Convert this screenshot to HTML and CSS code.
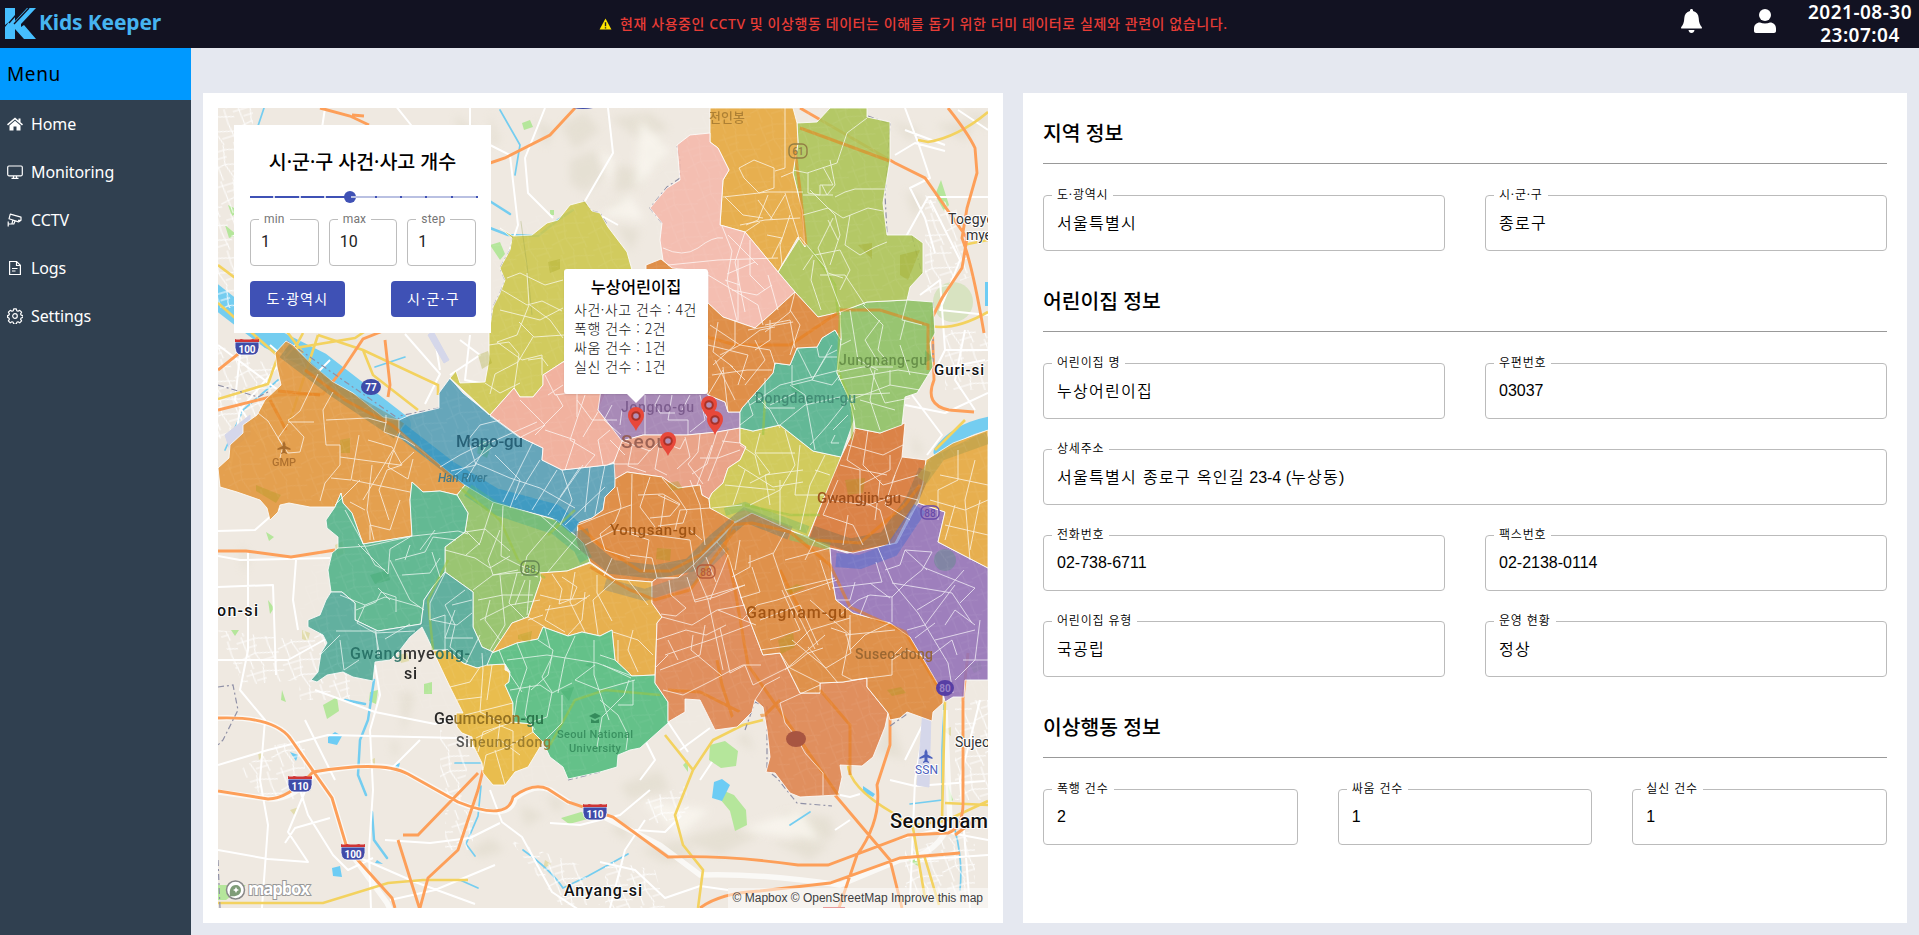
FILE: index.html
```html
<!DOCTYPE html>
<html lang="ko">
<head>
<meta charset="utf-8">
<title>Kids Keeper</title>
<link rel="stylesheet" href="styles.css">
</head>
<body>
<header class="topbar">
  <div class="brand">
    <svg class="brand-mark" viewBox="0 0 33 33"><path d="M1 1h10v13L23 1h9L17 17v3l3-2 12 14H20l-9-10v10H1V20L5 15 1 18z" fill="#46bfff"/><path d="M5 16 18 1M10 17 25 1" stroke="#121222" stroke-width="1.4" fill="none"/></svg>
    <span class="brand-name">Kids Keeper</span>
  </div>
  <div class="notice">
    <svg class="notice-icon" viewBox="0 0 14 14"><path d="M7 1 13.4 13H.6z" fill="#ffe500"/><path d="M7 5v4.4M7 10.6v1.3" stroke="#222" stroke-width="1.5"/></svg>
    <span class="notice-text">현재 사용중인 CCTV 및 이상행동 데이터는 이해를 돕기 위한 더미 데이터로 실제와 관련이 없습니다.</span>
  </div>
  <div class="tools">
    <svg class="tool-bell" viewBox="0 0 21 24" fill="#fff"><path d="M10.500 0c1 0 1.500.6 1.500 1.500v.6c3.600.8 5.500 3.500 5.700 7 .2 4.400 1.100 6.800 3 8.800.6.800.2 1.700-.7 1.700H1c-.9 0-1.300-.9-.7-1.700 1.900-2 2.800-4.400 3-8.800.2-3.500 2.100-6.200 5.700-7v-.6C9 .6 9.500 0 10.500 0zM7.500 21h6c-.3 1.900-1.400 3-3 3s-2.700-1.100-3-3z"/></svg>
    <svg class="tool-user" viewBox="0 0 22 24" fill="#fff"><circle cx="11" cy="6" r="6"/><path d="M6 13.500c3 1.200 7 1.200 10 0 3.500 0 6 2.500 6 6v2.500c0 1.200-.8 2-2 2H2c-1.200 0-2-.8-2-2v-2.500c0-3.500 2.500-6 6-6z"/></svg>
    <div class="clock"><span>2021-08-30</span><span>23:07:04</span></div>
  </div>
</header>
<div class="shell">
  <nav class="sidebar">
    <div class="menu-title">Menu</div>
    <a class="menu-item"><svg viewBox="0 0 16 16" fill="#fff"><path d="M8 1.500 0 8.300l1 1.200 7-6 7 6 1-1.200-2.500-2.100V2.500h-2v2z"/><path d="m8 4.800-5.500 4.700V14.500H6.500v-4h3v4h4V9.500z"/></svg><span>Home</span></a>
    <a class="menu-item"><svg viewBox="0 0 16 16" fill="none" stroke="#fff" stroke-width="1.200"><rect x=".7" y="2" width="14.600" height="9.800" rx="1.200"/><path d="M6.500 12v2M9.500 12v2M4.500 14.400h7"/></svg><span>Monitoring</span></a>
    <a class="menu-item"><svg viewBox="0 0 16 16" fill="none" stroke="#fff" stroke-width="1.200" stroke-linejoin="round"><path d="M3.300 2.200 14 5.200v3l-2.500 1.700L2 6.800zM11 8.300l3-.3M5.800 8.300 4.900 12H1.200M1.200 9.500v5M8 9l-1.200 3H5"/></svg><span>CCTV</span></a>
    <a class="menu-item"><svg viewBox="0 0 16 16" fill="none" stroke="#fff" stroke-width="1.200"><path d="M2.600 1.500h7l3.800 3.800v9.200H2.600zM9.500 1.500v4h4M5 8.500h5.500M5 11h3.500"/></svg><span>Logs</span></a>
    <a class="menu-item"><svg viewBox="0 0 16 16" fill="none" stroke="#fff" stroke-width="1.200" stroke-linejoin="round"><circle cx="8" cy="8" r="2.300"/><path d="M6.700.9h2.600l.5 1.900 1.200.5 1.700-1 1.900 1.900-1 1.700.5 1.200 1.900.5v1.800l-1.900.6-.5 1.200 1 1.700-1.900 1.900-1.700-1-1.200.5-.5 1.800H6.700l-.5-1.800-1.200-.5-1.700 1-1.900-1.900 1-1.700-.5-1.200L.6 9.400V7.600l1.300-.5.5-1.200-1-1.700 1.900-1.900 1.700 1 1.200-.5z"/></svg><span>Settings</span></a>
  </nav>
  <main class="content">
    <section class="card map-card">
      <div class="map">
        <svg class="map-canvas" viewBox="218 108 770 800">
          <defs>
            <filter id="soft"><feGaussianBlur stdDeviation="4"/></filter>
            <pattern id="mesh" width="38" height="34" patternUnits="userSpaceOnUse" patternTransform="rotate(-17)"><path d="M0 5h20l18 5M0 22l15-3 23 6M6 0l3 34M19 0l-4 19 5 15M30 0v15l3 19M9 12h10M20 28h13" fill="none" stroke="#fff" stroke-width="1"/></pattern>
            <path id="pin" d="M0 0C-2-6-8-9-8-16a8 8 0 0 1 16 0C8-9 2-6 0 0z"/>
            <g id="interstate"><path d="M-12-5Q-13 8-6 8H6Q13 8 12-5z" fill="#3f4ba8" stroke="#fff" stroke-width=".8"/><path d="M-12-5v-3q3 1 6 0 6 1 12 0 3 1 6 0v3z" fill="#cf3535"/></g>
            <clipPath id="city"><path d="M275 353 286 341 333 382 399 420 439 408 456 371 493 330 493 230 583 201 632 265 663 259 650 208 677 140 710 108H867L890 122 887 235 923 243 907 300 933 302 933 367 905 397 902 457 926 460 988 430V700L943 703 890 720 838 800H790L755 700 715 730 668 722 568 780 505 785 456 713 300 690 300 600 335 507 218 487z"/></clipPath>
          </defs>
          <rect x="218" y="108" width="770" height="800" fill="#efe9e1"/>

          <!-- terrain shading -->
          <g filter="url(#soft)" fill="#d9d4c2" opacity=".42">
            <path d="M560 125 585 112 600 130 575 150zM610 118l40-5 20 15-30 12zM570 160l25-10 10 25-20 18-15-10zM615 165l30 5-5 18-25 5zM590 200l20 5 20-8-5 16zM615 225l25 5-8 22zM640 150l25-10-10 30z"/>
            <path d="M620 785l40-15 10 20-40 10zM680 840l50-15 30 10-40 20zM780 812l50 5 5 20-35 10zM640 850l40-10 15 15-30 8zM520 805l25 10-20 12zM545 795l20 5-8 15zM610 830l15-12 5 25zM735 740l12-8 8 20zM770 840l60 5-20 15z"/>
            <path d="M890 120l30 10-10 12zM935 125l40-5-10 22zM905 190l20 10-10 20zM890 720l15 40-30-8zM960 110l28 5v15z"/>
            <path d="M400 690l15 5-12 40zM390 740l10 5-6 15zM470 850l20-12 15 12-25 8zM240 545l10 10-6 20zM912 432l12 20-10 4zM455 115l20 15-14 20zM490 112l10 30-10 5zM535 120l20 10-10 18z"/>
          </g>
          <g filter="url(#soft)" fill="#faf7f0" opacity=".8"><path d="M640 120l30 30-35 40zM600 215l30-20 15 25zM640 800l70 10-30 25zM740 830l60-20 20 30zM600 150l15 10-5 25z"/></g>
          <!-- parks -->
          <g fill="#b5e69b">
            <path d="M710 745l15-4 13 10-2 15-15 2-12-8zM722 790l12 5 12 15 1 15-12 6-5-20-10-12zM490 245l10-3 5 12-5 6zM323 705l14-8 2 14-12 8zM370 692l8-2-2 14-7-3zM424 684l8-2v12h-8zM561 818l20-6 18 4-30 8zM218 885h28l-20 15h-8zM266 532l8 5-5 4zM240 150l10 8-8 4zM228 205l12 6-8 5zM225 225l12 10-8 3zM935 195l6-15 8 25-5 6zM908 860l14-2-4 8zM948 785l5 15-4 4zM683 765l5-5v12zM522 123l8-3 3 7-9 3zM550 210h4v5h-4z"/>
            <circle cx="953" cy="302" r="20" opacity=".55" fill="#c5dfa8"/><path d="M970 665l10-4 2 8-8 4zM268 600l6 8-4 6zM231 630h8l-4 6zM282 690l4 12-5-2z"/>
          </g>
          <g fill="#e2dcae"><path d="M335 545l8-4 2 12-8 3zM302 630l8 3-2 8-6-2zM398 655l9-2 2 8-8 2zM370 760l5-2v7zM258 752l6 3-5 5zM462 655l7-2 3 9-7 2zM290 810l9-3-4 9zM545 860l6 4-8 5zM942 730l9-3v9z"/></g>
          <!-- water -->
          <g fill="none" stroke="#74cdf0" stroke-linecap="round">
            <path d="M210 292Q235 312 270 338L320 363 400 425" stroke-width="22"/>
            <path d="M940 452Q955 430 990 423" stroke-width="13"/>
            <path d="M374 680 368 720 360 740 358 775 366 795M372 812l2 28 13 18M345 700l20 4M488 200l22 14M490 228l18 7 30 1 20-16 15-10" stroke-width="2.500"/>
            <path d="M944 705l-2 45 0 50-32 4M523 850q28 20 40 38l25-12 40-22M460 880l18 8M481 786l-3 30-12 28 9 12M955 830q8 30 5 60M225 450l18-40 35-30M375 367l30-10M265 105l-10 30 12 20M500 110l20 35-5 30M790 825l20-13M455 763h25" stroke-width="1.700"/>
          </g>
          <g fill="#6dccf4"><path d="M714 782l8-3 8 6-4 8-4 8-10-3zM328 737l7-5 7 4-5 9-9-2zM290 752l8 3-2 6zM332 868l8-2 2 11-9-1zM394 765l6-2-2 7zM863 786l12 8-2 3-10-5zM985 282h3v24h-3zM377 860l6 4-8-1z"/></g>

          <!-- local streets -->
          <g fill="url(#mesh)" opacity=".95">
            <path d="M218 108h35v200h-35zM218 345l65 25-15 40-50 30zM275 745l30-5v60h-40l-25-30zM218 630l80 10v40l-55 5zM295 630l55 5v65h-50zM440 715l30 40-10 50-20-10zM445 810h28v40h-28zM510 840l70 25 20 40h-40zM605 860l50 10 10 38h-60zM925 195l30 10 20 70-50 20zM945 330h43v60h-43zM955 700h33v100h-33zM905 850l70-20v70h-70zM645 800l40-15 5 30-40 10z"/>
          </g>
          <g id="streets" fill="none" stroke="#fff" stroke-width="2" stroke-linejoin="round">
            <path d="M218 531 255 530 280 508M218 556 240 560 330 558M218 587l55-2 3 90M248 550v100l-8 40 25 30-5 60 8 45-8 110 22 30 20 20M218 660h70l45-25M296 560l-3 40 5 30M375 665l5 30-10 35 3 60-4 60 2 60M315 690l60 22 60 12 30-10M218 765l50-15 60-15 130 3 20 12M218 850l50 9 40 3-20-30 25-60M300 790l8 25 25 40 15 15 25-12M305 720l20 40 10 20M420 740l-30 30-25-5M330 818l-35 10-10 15M490 790l12 32 20 15 30 55 30 20M385 840l45 3 40-5 30-15M550 823l30 2 40-10 30-25M360 858l55 24 60 22M390 900l45-10 60-25M600 862l35 8 30 28 35-12 28 4M645 820l-20 30-15 58M640 780l15-20-10-20M668 722l20 30M680 750l30-22M700 780l12-18M635 830l30 2 15-15"/>
            <path d="M325 108l-6 40 20-5M395 105l20 25 30 3M470 108v25h-20M545 108l-20 50 3 35 25 25M490 145l20 10 8 70-10 30M585 201l28-48-5-45M600 215l18 10M218 345l60 45 30 10M240 355l-5 45 30 45M270 345l40 35 20-20M300 340l-60 70-10 60M405 334l35 40-15 30M460 340l20 15-30 20M470 335l-5 45 20 4M430 310l10 60M905 108l15 40 10 30-20 10 15 30 10 35M988 197h-60l-25 45M895 155l20-12 30 8M905 130l40 15M988 130l-30-20M930 200l30 60-20 50 48 5M920 295l20-15 5 70-10 20 50-10M905 405l40 8 43-20M912 395l30 40-15 20M965 330l-10 50 20 30M945 350h43M905 760l20-40-10 60-5 120M980 700l-20 80 10 128M890 780l25 6 70-5M895 840l40-10 53 10M915 860l73-5M840 795l10 2 10-3M850 820l-15 10"/>
          </g>
          <g fill="none" stroke="#d5d7ea"><path d="M225 435l25-20 0 20-20 15zM428 335l5-4 16 29-5 3zM923 710l8 2-2 75-12-2z" fill="#d5d7ea" stroke-width="1"/></g>

          <!-- highways -->
          <g fill="none" stroke="#fff" stroke-width="5.500" opacity=".7"><path d="M218 718q55-2 72 20l42 60 15 50 40 55 5 10M210 791l60 8q25 0 45-26 70-15 95 2l50 28q50 20 55-5 20-15 35-8l20 13M600 815l60 30 40 30q60-2 140 10l60-25q40-5 50-40l-5-110"/></g>
          <g fill="none" stroke="#f3d25f" stroke-width="2.600">
            <path d="M218 265l40 30 30 38 15 20M218 303l60 53-10 28-50 15M290 420l28-85M318 335l45 15 75 35v10M303 333l-8 15 60-10 12-8M363 350l10 25 45 35M988 112q-30 25-60 30l-10-2M930 326q25 5 58-14M988 240l-25 5M965 420l-30 30M218 903h105l65-20 35-3h45M665 735l28 35-18 45 8 30 20 25-5 38M693 770l20-30 30-15 20-5M848 760q-3 25 45 53l20 15 12 70M942 820l3-120M945 803l43 2M905 826l40-5 43-20M924 855l15 50"/>
          </g>
          <g fill="none" stroke="#fd9f59" stroke-width="2.900">
            <path d="M320 108l30 8 19 9M352 115l12 1M490 163l15-5 45-23 25-27M218 370l40-32M218 410l60-15 45-1 20-25 20-30 20-8M385 340l5 45-2 12M800 108l95 55 30 15 42 60-5 30-20 30-10 20 2 62q-10 25 15 30l25 2M948 108q20 25 27 40l2 25-10 35-5 30q10 25 22 95M218 551l28 0 45 6 44-7M218 718q55-2 72 20l42 60 15 50 45 50 3 10M218 791l50 8q20 0 45-27 70-12 95 2l50 28q50 20 55-5 20-15 35-8l20 13 45 15 55 40q60-2 130 8l30 0 80-30 40-2q15-5 15-30v-105l5-45M403 835h15l60-62M398 840l22 70M420 908l8-30 30-28 20-60 5-20M700 908q20-15 60-17l70-8 70-25 60-5M890 715v30l-13 40q5 35-20 70l-18 53M835 795l55 65 12 48M975 820l-20 15"/>
          </g>
          <g fill="none" stroke="#8f90a6" stroke-width="1.200" stroke-dasharray="6 3 2 3">
            <path d="M218 687l15-2 5 25-15 30-5 5M218 860l2 48M218 385l40 12 10-5M287 341l60 42 55 38M439 408l-40 8M489 333l4-26 7-14 5-13-5-12 10-18 3-15M583 201l9 10 8 2 8 13M600 772l-32 8M745 730l10-28 12 5v30l0 33 10 8 20 25 35 3M662 223l-12-15 17-21 13-9 0-18-3-14M868 116l22 8-5 70 2 40M912 236l10 38M933 302v60M423 623l-20 20M890 726l17-12"/>
          </g>

          <!-- districts -->
          <g class="districts">
            <path fill="#e3973b" d="M275 353 286 341 293 345 310 363 333 382 353 393 383 417 399 420 399 432 417 447 450 472 465 485 457 495 440 491 423 492 412 482 410 500 412 536 363 544 352 513 343 503 341 493 335 507 310 507 289 503 280 505 278 512 270 520 267 508 260 500 237 492 220 487 218 468 229 458 230 445 243 433 243 425 257 415 265 400 281 385 277 367z"/>
            <path fill="#549db5" d="M450 378 463 393 490 415 520 437 543 448 542 460 562 470 607 465 616 463 615 487 605 497 603 510 592 518 578 523 577 537 557 520 517 509 493 502 465 485 440 465 399 432 399 420 410 415 439 408 439 393z"/>
            <path fill="#cec84d" d="M585 201 592 211 600 213 608 227 627 252 632 270 632 300 563 362 543 375 543 385 533 397 520 397 514 388 490 415 450 378 456 371 460 383 485 382 489 360 489 333 493 307 500 293 505 280 500 268 510 250 512 238 500 228 513 236 532 235 547 223 558 220 570 205z"/>
            <path fill="#f2ab96" d="M563 362h45l-3 33-7 15 25 31-9 21-7 3-45 5-20-10 1-12-23-11-30-22 24-27 6 9h13l10-12v-10z"/>
            <path fill="#9f7db2" d="M605 362h95l8 33 17 7 3 10h12v16l-23 4-30 3h-44l-21 6-24-31z"/>
            <path fill="#ea9b7d" d="M622 441 643 435 687 435 717 432 740 428 740 443 746 447 740 460 728 468 723 483 712 493 709 499 702 495 700 485 678 488 662 477 627 472 615 479 614 462z"/>
            <path fill="#dd8335" d="M615 479 627 472 662 477 678 488 700 485 702 495 709 499 710 508 728 517 735 522 693 565 678 578H657L652 582 615 579 590 562 583 543 577 537 578 523 592 518 603 510 605 497 615 487z"/>
            <path fill="#8fc163" d="M465 485 493 502 517 509 557 520 577 537 583 543 590 562 567 571 540 573 541 579 528 617 512 623 493 652 482 647 473 627 473 592 445 572 445 547 465 532 468 513 457 495z"/>
            <path fill="#50b389" d="M457 495 440 491 423 492 412 482 410 500 412 536 363 544 352 513 343 503 341 493 335 507 326 520 327 528 338 537 338 548 332 553 328 570 331 592 342 592 355 603 355 620 378 631 421 624 424 600 432 588 445 572 445 547 465 532 468 513z"/>
            <path fill="#4fa997" d="M445 572 473 592 473 627 482 647 493 652 487 666 477 668 463 663 448 650 433 650 427 637 422 627 410 637 400 650 390 660 375 662 373 681 353 677 343 672 327 675 317 682 311 680 318 672 321 653 327 643 323 635 308 627 308 620 320 615 326 600 331 592 342 592 355 603 355 620 378 631 421 624 424 600 432 588z"/>
            <path fill="#e9b73a" d="M433 651 448 650 463 663 477 668 487 665 505 664 505 670 510 672 509 682 505 685 513 703 513 722 532 724 533 732 543 742 528 767 515 772 505 785 493 785 483 773 482 763 473 745 472 737 462 733 457 727 456 713 463 713 450 687z"/>
            <path fill="#e6a93c" d="M540 573 567 571 590 563 613 579 652 582 652 603 662 617 657 623 655 675 632 676 615 660 612 630 600 636 582 632 568 636 543 627 538 639 517 643 492 653 512 623 528 617 541 579z"/>
            <path fill="#51bc7d" d="M492 653 517 643 538 639 543 627 568 636 582 632 600 636 612 630 615 660 632 676 655 675 655 683 668 702 668 723 640 748 630 750 618 755 617 767 600 772 568 779 563 767 550 757 543 742 533 732 532 724 513 722 513 703 505 685 509 682 510 672 505 664 487 665z"/>
            <path fill="#df834d" d="M652 582 657 578 678 578 693 565 717 542 728 555 733 572 743 603 763 655 780 653 800 693 820 693 820 683 843 682 867 678 867 687 888 713 885 727 873 757 862 766 840 765 842 777 838 795 800 797 790 793 775 773 766 772 770 757 767 730 763 707 755 700 752 712 737 727 715 730 700 700 685 699 685 712 668 722 668 702 655 683 657 623 662 617 652 603z"/>
            <path fill="#dd8537" d="M717 542 735 523 752 513 787 529 808 538 830 548 832 577 836 600 853 613 890 623 910 637 928 667 943 693 943 703 933 712 932 721 907 712 900 718 890 720 888 713 867 687 867 678 843 682 820 683 820 693 800 693 780 653 763 655 743 603 733 572 728 555z"/>
            <path fill="#9371b8" d="M830 548 847 553 897 543 918 503 945 512 938 542 988 568 988 680 965 680 964 697 953 697 945 702 943 693 928 667 910 637 890 623 853 613 836 600 832 577z"/>
            <path fill="#cec84b" d="M740 428 753 431 780 425 813 451 841 457 833 480 823 500 808 537 787 529 752 513 735 522 710 508 709 499 712 493 723 483 728 468 740 460 746 447 740 443z"/>
            <path fill="#d97533" d="M855 428 880 433 905 423 902 457 926 460 923 483 917 500 895 543 853 553 830 548 808 538 823 500 841 457z"/>
            <path fill="#e6a83b" d="M926 460 953 443 988 430 988 568 938 542 945 512 918 503 923 483z"/>
            <path fill="#50b28c" d="M742 408 773 373 775 363 790 365 797 348 817 347 822 338 835 330 841 340 837 373 850 400 854 420 841 457 813 451 780 425 753 431 740 428 740 412z"/>
            <path fill="#8dc162" d="M840 312 867 302 907 300 933 302 935 333 930 343 933 367 917 393 905 397 902 425 880 433 855 428 854 420 850 400 837 373 841 340z"/>
            <path fill="#adc456" d="M797 123 817 122 830 108 867 108 867 117 890 122 890 160 885 190 883 203 887 235 912 235 923 243 923 273 910 287 907 300 867 302 840 312 828 315 818 317 795 292 778 272 800 237 805 247 802 210 793 173 798 143z"/>
            <path fill="#e6a83b" d="M710 108H793L797 123 798 143 793 173 802 210 805 247 798 237 783 263 778 272 760 250 745 232 720 225 723 180 729 170 718 148 710 142z"/>
            <path fill="#f5b9ab" d="M710 142V133L690 135 677 145 680 180 667 188 650 208 662 223 660 240 663 260 708 303 723 317 755 328 772 313 795 292 778 272 760 250 745 232 720 225 723 180 729 170 718 148z"/>
            <path fill="#dd8335" d="M661 259 672 268 708 272V303L723 317 755 328 772 313 795 292 818 317 840 312 841 340 835 330 822 338 817 347 797 348 790 365 775 363 773 373 742 408 740 412H728L725 402 708 395 646 300V265z"/>
          </g>

          <!-- river and arterial roads showing through the fill -->
          <g clip-path="url(#city)" fill="none">
            <path d="M285 350 335 388 399 431" stroke="#7d8058" stroke-width="18" opacity=".45"/>
            <path d="M401 430 450 468 495 495 555 511 575 528" stroke="#2795c8" stroke-width="14" opacity=".6"/>
            <path d="M468 490 495 508 555 528 580 548 586 560" stroke="#4db384" stroke-width="13" opacity=".45"/>
            <path d="M581 530 585 545 612 567 655 572 690 565 715 540 745 515 790 533" stroke="#7d7f67" stroke-width="14" opacity=".5"/>
            <path d="M605 584 645 595 690 580 725 545" stroke="#8b8e79" stroke-width="12" opacity=".45"/>
            <path d="M725 512 745 506 808 530M790 536 830 546" stroke="#8ebf62" stroke-width="8" opacity=".6"/>
            <path d="M812 532 850 545 885 538 912 500 925 470" stroke="#92734f" stroke-width="13" opacity=".55"/>
            <path d="M836 560 860 562 892 550 920 508" stroke="#5d70cb" stroke-width="14" opacity=".6"/>
            <path d="M922 480 940 455 988 438" stroke="#b8a14d" stroke-width="12" opacity=".65"/>
            <g stroke="#ea7e15" stroke-width="3" opacity=".55">
              <path d="M278 391 320 395M270 400 286 430M305 370 345 400 392 425 455 480M578 525 600 545 640 571 670 571 700 555 730 525 752 523 790 532 830 565 850 607 905 632 940 690M590 567 630 590 655 600 690 590 735 530M733 520 725 545 735 590 748 665 838 795M717 660 722 685 735 725M668 690 700 692 750 717 765 715 780 700M820 690 850 725 850 775M780 570 800 610M800 128 895 163M795 150 800 190 806 245M840 310 880 310 928 325 928 370M650 320 735 345 790 345 839 312M815 540 860 543 905 505 920 485"/>
            </g>
            <g stroke="#9ac53f" stroke-width="2.500" opacity=".55"><path d="M460 488 500 520 518 560 545 578M550 745 575 700 605 690 660 695M745 505 790 515 820 515M840 315 838 370 852 405 852 440M765 400 763 435M812 250 835 285 838 315M433 650 428 600 448 560M548 535 575 510"/></g>
            <path d="M520 215q8 50 12 100" stroke="#8b9b45" opacity=".3"/>
          </g>
          <g fill="#9a9c10" opacity=".27"><path d="M256 485l25 10-5 8-20-12zM340 440l10-2v15h-9zM478 355l10-4 4 12-10 6zM548 262l12-3v10l-10 4zM657 548l14 1-1 12-14-2zM668 483l10-2 5 8-12 2zM778 640l15-8 2 15-14 7zM518 635l14-4-2 12-12-4zM785 590l12-6 8 4-15 6zM900 255l20-5-12 30-8-5zM845 480l20-2-2 15-15 2zM887 690l14-3 5 6-14 3zM858 245l14-2v16z"/></g>
          <g fill="#1e9b52" opacity=".22"><path d="M370 575l18-5 2 10-15 4zM585 665l10-5v10zM560 690l14-3-5 14zM790 385l8-2 4 12-10-4zM480 440l12 3-5 15-10-5zM925 350l8 8-8 5z"/><circle cx="945" cy="560" r="11"/></g>
          <g clip-path="url(#city)" opacity=".07"><rect x="218" y="108" width="770" height="700" fill="url(#mesh)"/></g>

          <!-- neighbourhood boundaries -->
          <g class="dong">
            <path d="M318 374l-18 37-7 6-5 3 16 17-4 15-12 1-10-15 10-14M333 392l-10 18 3 35 14 0 0 20-15 18-5 18M326 420l42-2 18 5 0-8M288 422h26M386 422l-2 10 22 8 9 6M359 435l-8 45-20-2M340 457l60 8 14-13M368 440l24 7 10 18-15 5-8 20 10 30M400 432l-12 35 20 12 5-20M393 450l-30 50M352 480l58 12M372 465l-5 45 7 30M335 505l25-25M258 413l10 8 15 25-3 12"/>
            <path d="M449 378l40 37M500 420l-20 5-12 15 8 25-25 6M490 440l-30 15-20 12M490 416l30 22M467 479l20-35 50-22M503 502l20-40 10-20M532 510l25-40M548 515l35-50M565 525l40-38M475 463l35 15 30 10 35 20M495 455l25 25-10 28M540 460l-25 40M562 470l10 30-12 25M580 467l-20 30M590 467l-5 45M605 465l-10 50M455 475l40-30"/>
            <path d="M507 278l13-5 25 12 18-5M502 290l25 15 15-4 20 10M527 273l2 32-12 30-20 7M500 310l40 10 23-12M489 345l20-3 10 12-5 35M530 305l20 15 13 18M497 342l25 18 20-5 0 20M519 322l15 15 30-2M533 337l-15 25-23 12-5 20M485 383l15 10 20-10M528 360l14-2 6 8"/>
            <path d="M556 394l7 12-20 20-22 11M563 385l-15 10M545 375l10 20 22-3 0 25M577 400l15 20 25 0M585 395l-15 45 25 15-10 12M520 400l25 25-10 10M598 412l-15 25M610 430l-12 10 5 25M545 430l30 10-10 30M625 455l-15-15M592 362l5 22 10 10"/>
            <path d="M645 395v40M660 395l-5 10 5 8h15M672 395l-4 25 20 0 0 15M690 395l-8 15M700 395l5 25-15 12M715 400l-10 15 13 15M612 405l-8 15 17 15M622 410l-2 15M622 441l28 10 10-10 20 8 5-10M632 446l-4 20 18 6M660 441l-5 28 12 6M685 437l5 20-13 12M700 434l-2 18-10 12 15 20M717 432l-10 32-15 10M728 431l-20 50M740 450l-22 8-18 0M650 450l-12 14-24 0M740 443l-18-2M712 445l-15 40"/>
            <path d="M632 474l-1 60 18 6-5 32M638 495l25-1 17 10-10 12-20 2M662 478l15 18 10 15-4 12-25 3M617 487l4 20-6 15-15 12 5 16 25 8M578 525l30-12 23-8M585 545l30-15 75 10 4 25M612 558l-8 18M690 480l10 25 5 40M650 477l-10 30 15 20M680 505l-22-10M657 578l-5-20-22-3M675 530l5-20 30-2M665 495l-5 35M702 540l-12-10"/>
            <path d="M493 503l-13 40-14 12M503 506l-2 50 20 10 19 6M445 550l30 8 15 10 20-12M465 532l20-3 25 22M480 545l-15-15M500 530l-12 30 5 15 30-3 15 5M473 590l20-15 25-5M478 600l25-5 30 0M480 620l30-15 30-5M500 575l5 50-15 25M517 573l-8 30 15 15M490 600l-5 20 15 20M525 580l-10 25M530 580l-3 35M557 521l-30 35-5 20M577 537l-30 36M540 515l40 35"/>
            <path d="M345 510l30 55 10 5M338 548l30-2 45-10 45-5 10 3M400 500l-10 30-20-5 0 15M365 510l-15-8M390 560l20 40 14 10M358 544l30 30 2-25 20-12M395 560l30-8 8-15 23 3M340 595l25 10 20-8 35 10M365 605l-8 18 18 10 40-2M432 552l8 25M402 575l28-2 10-15M390 600l-12-12M410 545l-5 15M336 631h40l2 25M356 610l20-8 5-10 15 5 0 15M435 530l-15 20"/>
            <path d="M445 573l-15 30 0 17 15-5 0 35M432 620l25 5 15-12M465 590l-20 15 10 20-5 22 18 15M472 600l-20 5M480 635l-15 30M455 610l-10 28 28 0M375 631l5 25M340 640l4 30 15-10M320 655l20-20M410 624l-25 15"/>
            <path d="M482 653l1 17-3 42 20 10-3 25M450 687l20-5 10-15M465 715l48-12M457 700l25-3M492 665l-5 35M513 722l-30 10-5 20M500 740l20 15M476 738l25-12 12 5 0 40M533 732l-25 15-22 8-3 15M495 750l10 35"/>
            <path d="M552 574l10 15-3 15 13-5 5-12-15-10M575 572l-5 30 15 30M540 595l20 5 27-2M597 575l0 18 15 28M545 610l30-5 15-10M615 580l-22 20 5 35M628 580l20 25M550 605l-5 15 20 12M528 620l15-5M613 632l25 8 15 15M618 640l0 22M633 630l-5 20 10 22M528 617l17 10M585 592l-3 28-14 15"/>
            <path d="M499 650l8 20 15 22M517 643l10 25-10 30-3 20M507 660l40-5 50 8 35 13M538 640l15 10-5 25-17 15M545 628l5 20M575 636l-10 22-7 35M594 640l0 35 15 45M510 690l30-5 12 8 20-10M552 657l-10 20 10 15-5 25-15 5M595 665l-20 15 25 10 35-10M600 655l15 5M629 680l-5 15-22 22-5 30M603 665l28 13M633 680l0 25-15 0M600 700l18 15 10 20-2 15M562 695l0 28-20 20M530 685l-5 30 10 15"/>
            <path d="M669 580l2 15 15 13-10 8-15-2M656 640l30-10 20 5 20-10M687 577l8 25 20-5 30-12M693 565l15 35 15 70M706 557l10 25M662 617l30 8 25-15 28-5M695 600l50-15M718 610l38 15M728 555l-18 45M668 655l-12 12M665 655l45-15 40-15M693 635l-2 15 30 25M720 628l10 45 15-8M705 625l-5 30-40 15M668 640l10 20M663 690l20 5 30-15 15-8 15-7 18 0M750 555l0 12-18 10M752 567l8 25-20 6M785 532l-12 22 12 35 30 60M773 553l-25 10M785 560l45-12M815 540l-10 20M757 605l20-5 60-20M770 640l30-10-18-40M760 650l35-5 15-15 40-12M820 560l10 30M785 590l50-12M792 640l34 28 25-15-5-20-15-5M800 605l18 40M810 600l40 35 0-20M760 620l40-15M757 605l-15 15M740 540l-5 30M780 653l10 15 30 15M745 665l8 20 20-10 20-10 15-12 15-5M825 635l-40 35M850 635l-8 40 10 5 40-5 0-18 10-10M850 630l0 20 15-15 25-12M808 647l30 36M780 703l5 20 12 15 8 15 18 20v22M755 700l10-15 15-8M780 703l40-18M845 635l50-5M892 660l15-10 20 8"/>
            <path d="M878 548l15 35 25 30 30 50 5 30M832 588l50-6-6-20M855 582l-5 18-14 0M840 615l18-15 12-5 22 2 0 25M868 595l-8 20M892 597l15-15 15-12 10-18M925 568l50 20-15 15M917 610l25-15 22-25M955 585l-30 40-18 5M915 638l20-15M932 655l20-15 5 15M892 583l60 10 20 30M885 570l15-5 5-15 27 2M945 625l10-15 20 15M935 640l40-10M955 680l20-20 5-40M963 660l25 0M870 583l20 15M905 550l22 20"/>
            <path d="M760 433l-5 20 15 20-20 10M785 430l10 35-15 25-30 15M770 505l-5-30 38-5M740 445l15 10 5 20M755 453l40 0M738 465l35 22 30-5M725 485l50 5M800 445l-5 50 30 0M825 455l-15 30-10 45M745 470l-12 35M780 480l0 45M712 508l30-3M815 470l15 5"/>
            <path d="M855 430l-8 30 15 10 25 5M848 445l35 10 20-10M868 430l-5 35 20 20 35-10M840 465l20 5 0 30 20 10 10 35M828 500l40 5 30-10 20 5M838 480l-15 35 30 10 10 20M860 485l30-15 0-15M880 480l-5 40M848 515l-5 30M895 475l-10 30 25 15M902 457l-10 25M958 450l0 30-20 10 0 30M940 475l48 10M930 500l35 10 23-10M975 460l-10 40 5 60M945 525l43 10M955 505l-10 35M980 500l-10 50"/>
            <path d="M755 395l15 15 10 18M740 425l13-10-5-15M792 365l0 20 20-5 15-25 10-5M797 348l15 30M840 370l-60 15-30 20M790 385l15 10 10 55M765 378l0 30 30 0M817 347l2 10 18 0M832 345l-20 35 20 5 8-10M770 405l25-12M848 400l-20 25-18 20M833 430l15-15M780 425l25-20 35-8M835 435l-4 8h8"/>
            <path d="M850 310l8 50 20 10M863 305l20 20-5 25 10 12M907 300l-5 20 20 5M880 320l-15 20 15 25M841 345l10-5M838 372l25-5 30 0M838 380l60-10 32 5M850 400l40-15 30 5M870 368l15 35 25-5M860 400l35 10M890 370l0 15M900 345l10 30M905 320l-5 20M875 370l-5 30 10 30M855 410l-5-15 40-2"/>
            <path d="M867 118l-20 15-10 30-30 10-14-3M808 173v20l12 2 0-10 13 0-10-18M830 160l5 25-8 10-5-10M810 190l25 25 5 20-10 30M803 195l30 0M835 197l10-5 10-3 32 0M803 215l25-7 15 10 25-10 15 3M850 215l-5 30 15 10 15-8 12-5M833 218l-15 30 10 25 15 5M815 255l25-5 10 20-10 20M820 275l25 0 20 30M800 237l25 30 15 40M803 270l10-15M814 260l-3 20 10 30M838 240l-10-20"/>
            <path d="M739 168l15-8 20 8 0 20-15 5-15-15zM785 108l0 60-10 3M723 197l45-5 35 0M768 195l-10 25-12 5M740 225l25-5 35-2M773 220l-15-20M785 195l-15 25M793 172l-12 5M790 215l-10 30 2 20M767 235l15 3-10 20M745 232l15-10M725 197l18 18 20 3M785 193l14 45"/>
            <path d="M663 248q20 10 35 0 15-12 25-10M668 265l50-5 60-2M722 226l10 25-5 30 10 40M745 232l-10 30 10 50M750 240l0 35 15 15M755 262l-28 12M738 260l0 60M732 290l25 5 15-10M768 275l10 35M708 275l50 30 5 20M740 285l-15-5M728 235l30 30"/>
            <path d="M710 325l30 20 20-15 15-3M795 292l-5 20-25 20M718 322l-5 30 20 15M735 320l0 25-22 20M740 345l30 5 5 15M708 345l40 10-10 30M730 365l15 15M712 375l35-5 25 0M708 395l15-25M770 320l0 20-15 10M765 325l25-5 5 28M748 330l45-8M728 412l-5-45M755 340l10 20-20 25M715 360l20 40M790 310l10 15-10 30M740 345l-20 10"/>
          </g>

          <!-- labels -->
          <g class="place">
            <text x="456" y="447" textLength="67" fill="#215a70" font-size="17">Mapo-gu</text>
            <text x="438" y="482" textLength="49" fill="#35788f" font-size="12" font-style="italic" opacity=".7">Han River</text>
            <text x="621" y="412" textLength="73" fill="#78588a" font-size="14">Jongno-gu</text>
            <text x="621" y="448" textLength="52" fill="#935b4f" font-size="19">Seoul</text>
            <text x="610" y="535" textLength="86" fill="#9a4f10" font-size="15">Yongsan-gu</text>
            <text x="755" y="403" textLength="101" fill="#3f8872" font-size="14">Dongdaemu-gu</text>
            <text x="839" y="365" textLength="88" fill="#638b45" font-size="14">Jungnang-gu</text>
            <text x="817" y="503" textLength="84" fill="#984917" font-size="15">Gwangjin-gu</text>
            <text x="746" y="618" textLength="101" fill="#9c4e0e" font-size="16">Gangnam-gu</text>
            <text x="855" y="659" textLength="78" fill="#95632f" font-size="14">Suseo-dong</text>
            <text x="709" y="122" textLength="36" fill="#a87c32" font-size="13">전인봉</text>
            <text x="272" y="466" textLength="24" fill="#a96c2c" font-size="11">GMP</text>
            <text x="557" y="738" textLength="76" fill="#358c5c" font-size="11">Seoul National</text>
            <text x="569" y="752" textLength="52" fill="#358c5c" font-size="11">University</text>
            <text x="350" y="659" textLength="120" font-size="16"><tspan fill="#246e63">Gwang</tspan><tspan fill="#222">mye</tspan><tspan fill="#246e63">ong-</tspan></text>
            <text x="404" y="679" textLength="13" fill="#111" font-size="16">si</text>
            <text x="434" y="724" textLength="110" font-size="16"><tspan fill="#111">Ge</tspan><tspan fill="#8b6a1e">umcheon</tspan><tspan fill="#246e45">-gu</tspan></text>
            <text x="456" y="747" textLength="95" font-size="14"><tspan fill="#444">Si</tspan><tspan fill="#94772a">neung-dong</tspan></text>
            <g class="outer">
              <text x="934" y="375" textLength="50" font-size="15">Guri-si</text>
              <text x="217" y="616" textLength="41" font-size="16">on-si</text>
              <text x="564" y="896" textLength="78" font-size="16">Anyang-si</text>
              <text x="890" y="828" textLength="98" font-size="20">Seongnam</text>
            </g>
            <g class="minor">
              <text x="948" y="224" textLength="46" font-size="14">Toegye</text>
              <text x="966" y="240" textLength="26" font-size="14">mye</text>
              <text x="955" y="747" textLength="35" font-size="14">Sujeo</text>
              <text x="915" y="774" textLength="23" font-size="12" style="fill:#4c61bd">SSN</text>
            </g>
          </g>
          <path d="M926 749l1.500 3v2.500l5 3v1.500l-5-1.500v3l1.500 1.500v1l-3-1-3 1v-1l1.500-1.500v-3l-5 1.500v-1.500l5-3v-2.500z" fill="#4c61bd"/>
          <path d="M284 441l1.500 3v2l5 2.500v1.500l-5-1v3l1.500 1v1l-3-1-3 1v-1l1.500-1v-3l-5 1v-1.500l5-2.500v-2z" fill="#a96c2c"/>
          <path d="M589 716l6-3 6 3-6 3zM591 719v4h8v-4l-4 2z" fill="#358c5c"/>

          <!-- route shields -->
          <g class="shield">
            <use href="#interstate" x="247" y="347"/><text x="247" y="353">100</text>
            <use href="#interstate" x="300" y="784"/><text x="300" y="790">110</text>
            <use href="#interstate" x="353" y="852"/><text x="353" y="858">100</text>
            <use href="#interstate" x="595" y="812"/><text x="595" y="818">110</text>
            <ellipse cx="371" cy="387" rx="10" ry="8" fill="#3f4ba8"/><text x="371" y="391">77</text>
            <ellipse cx="945" cy="688" rx="9" ry="8" fill="#573ea4"/><text x="945" y="692" style="fill:#9781c6">80</text>
            <ellipse cx="796" cy="739" rx="10" ry="8" fill="#a85541"/>
            <path d="M573 108h20q-10 2-20 0" fill="#3f4ba8"/><path d="M823 907h22v1h-22z" fill="#cf3535"/>
          </g>
          <g class="route" fill="none" stroke-width="1.400">
            <rect x="789" y="144" width="18" height="14" rx="5" stroke="#927d44"/><text x="798" y="155" fill="#927d44">61</text>
            <rect x="521" y="561" width="18" height="14" rx="5" stroke="#668751"/><text x="530" y="573" fill="#668751">88</text>
            <rect x="697" y="565" width="18" height="13" rx="5" stroke="#b55b3b"/><text x="706" y="576" fill="#b55b3b">88</text>
            <rect x="921" y="506" width="18" height="13" rx="5" stroke="#694baa"/><text x="930" y="517" fill="#694baa">88</text>
          </g>

          <!-- incident pins -->
          <g fill="#e8483a">
            <use href="#pin" x="636" y="431"/><use href="#pin" x="709" y="420"/><use href="#pin" x="715" y="435"/><use href="#pin" x="668" y="456"/>
          </g>
          <g fill="#b28fb5" stroke="#a93228" stroke-width="2"><circle cx="636" cy="416" r="3.800"/><circle cx="709" cy="405" r="3.800"/><circle cx="715" cy="420" r="3.800"/><circle cx="668" cy="441" r="3.800"/></g>

          <!-- attribution logo -->
          <circle cx="235.500" cy="890" r="9" fill="#fff" stroke="#888" stroke-width="1.500"/><path d="M230 896c-1-7 1-11 6-11a5 5 0 0 1 5 5c0 5-5 7-11 6z" fill="#7f9c78"/><path d="M236 887l1 2 2 1-2 1-1 2-1-2-2-1 2-1z" fill="#fff"/>
          <text class="mapbox" x="248" y="895" textLength="62">mapbox</text>
        </svg>

        <div class="panel">
          <h2 class="panel-title">시·군·구 사건·사고 개수</h2>
          <div class="slider">
            <i class="done"></i><i class="done"></i><i class="done"></i><i class="done thumb"></i><i></i><i></i><i></i><i></i><i></i>
          </div>
          <div class="range">
            <div class="mini"><label>min</label><span>1</span></div>
            <div class="mini"><label>max</label><span>10</span></div>
            <div class="mini"><label>step</label><span>1</span></div>
          </div>
          <div class="actions"><button class="btn wide">도·광역시</button><button class="btn">시·군·구</button></div>
        </div>

        <div class="popup">
          <h3>누상어린이집</h3>
          <p>사건·사고 건수 : 4건</p><p>폭행 건수 : 2건</p><p>싸움 건수 : 1건</p><p>실신 건수 : 1건</p>
        </div>
        <div class="credit">© Mapbox © OpenStreetMap Improve this map</div>
      </div>
    </section>

    <section class="card info-card">
      <h2 class="section-title">지역 정보</h2>
      <div class="grid two">
        <div class="field"><label>도·광역시</label><span class="ko">서울특별시</span></div>
        <div class="field"><label>시·군·구</label><span class="ko">종로구</span></div>
      </div>
      <h2 class="section-title">어린이집 정보</h2>
      <div class="grid two">
        <div class="field"><label>어린이집 명</label><span class="ko">누상어린이집</span></div>
        <div class="field"><label>우편번호</label><span>03037</span></div>
        <div class="field full"><label>상세주소</label><span><span class="ko">서울특별시 종로구 옥인길</span> 23-4 (<span class="ko">누상동</span>)</span></div>
        <div class="field"><label>전화번호</label><span>02-738-6711</span></div>
        <div class="field"><label>팩스번호</label><span>02-2138-0114</span></div>
        <div class="field"><label>어린이집 유형</label><span class="ko">국공립</span></div>
        <div class="field"><label>운영 현황</label><span class="ko">정상</span></div>
      </div>
      <h2 class="section-title">이상행동 정보</h2>
      <div class="grid three">
        <div class="field"><label>폭행 건수</label><span>2</span></div>
        <div class="field"><label>싸움 건수</label><span>1</span></div>
        <div class="field"><label>실신 건수</label><span>1</span></div>
      </div>
    </section>
  </main>
</div>
</body>
</html>
```

FILE: styles.css
```css
* { box-sizing: border-box; margin: 0; padding: 0; }
body { width: 1919px; height: 935px; overflow: hidden; display: flex; flex-direction: column; font-family: "Noto Sans", "Noto Sans CJK KR", sans-serif; color: #000; }
.topbar { height: 48px; flex: none; background: #121222; display: flex; align-items: center; justify-content: space-between; }
.brand { display: flex; align-items: center; width: 599px; padding-left: 4px; gap: 2px; }
.brand-mark { width: 33px; height: 33px; margin-top: -2px; }
.brand-name { color: #46b4f0; font-weight: 700; font-size: 21px; line-height: 30px; margin-top: -4px; white-space: nowrap; letter-spacing: -.15px; }
.notice { display: flex; align-items: center; gap: 8px; }
.notice-icon { width: 13px; height: 14px; }
.notice-text { color: #e83c36; font-weight: 500; font-size: 14px; white-space: nowrap; letter-spacing: .59px; margin-top: -2px; }
.tools { margin-left: auto; display: flex; align-items: center; }
.tool-bell { width: 21px; height: 24px; margin-top: -6px; }
.tool-user { width: 22px; height: 24px; margin: -6px 30px 0 52px; }
.clock { width: 108px; margin-right: 5px; display: flex; flex-direction: column; align-items: center; color: #fff; font-weight: 600; font-size: 19px; line-height: 23px; letter-spacing: .5px; white-space: nowrap; }
.shell { flex: 1; display: flex; min-height: 0; }
.sidebar { width: 191px; flex: none; background: #304050; }
.menu-title { height: 52px; background: #0099ff; display: flex; align-items: center; padding-left: 7px; font-size: 19px; font-weight: 400; letter-spacing: .6px; }
.menu-item { height: 48px; display: flex; align-items: center; gap: 8px; padding-left: 7px; color: #fff; font-size: 16px; letter-spacing: -.1px; }
.menu-item svg { width: 16px; height: 16px; }
.content { flex: 1; background: #e5e8f0; display: flex; gap: 20px; padding: 45px 12px 12px; }
.card { background: #fff; }
.map-card { width: 800px; padding: 15px; }
.map { position: relative; width: 770px; height: 800px; overflow: hidden; }
.map-canvas { display: block; width: 770px; height: 800px; }
.districts path { opacity: .88; stroke: #fff; stroke-width: 1; stroke-opacity: .85; }
.dong { fill: none; stroke: #fff; stroke-width: .9; opacity: .75; stroke-linejoin: round; }
.place text { font-family: Roboto, "Noto Sans CJK KR", sans-serif; font-weight: 500; opacity: .9; }
.place .outer text { fill: #111; font-weight: 500; opacity: 1; paint-order: stroke; stroke: #fff; stroke-width: 2px; }
.place .minor text { fill: #333; font-weight: 400; opacity: 1; paint-order: stroke; stroke: #fff; stroke-width: 2px; }
.shield text { fill: #fff; font: 700 10px Roboto, sans-serif; text-anchor: middle; }
.route text { font: 500 10px Roboto, sans-serif; text-anchor: middle; stroke: none; }
.mapbox { fill: #fff; stroke: #999; stroke-width: 2px; paint-order: stroke; font: 700 17px "Open Sans", sans-serif; }
.panel { position: absolute; left: 16px; top: 17px; width: 257px; height: 208px; background: #fff; padding: 22px 16px 0; }
.panel-title { text-align: center; font-size: 19.500px; font-weight: 500; line-height: 30px; white-space: nowrap; }
.slider { height: 14px; margin: 13px -3px 0 0; display: flex; align-items: center; }
.slider i { position: relative; flex: 1; height: 2px; background: #b9c0e2; border-right: 2px solid #3f51b5; }
.slider .done { background: #3f51b5; border-right-color: #d3d7ee; }
.slider .thumb::after { content: ""; position: absolute; right: -7px; top: -5px; width: 12px; height: 12px; border-radius: 50%; background: #3f51b5; }
.range { display: grid; grid-template-columns: repeat(3, 1fr); gap: 10px; margin-top: 15px; width: 226px; }
.mini { position: relative; height: 47px; border: 1px solid #bdbdbd; border-radius: 4px; padding: 12px 0 0 10px; font: 16px/20px Roboto, sans-serif; color: #222; }
.mini label { position: absolute; top: -8px; left: 8px; padding: 0 5px; background: #fff; font-size: 12px; line-height: 14px; color: #757575; letter-spacing: .2px; }
.actions { display: flex; justify-content: space-between; margin-top: 15px; width: 226px; }
.btn { width: 85px; height: 36px; border: 0; border-radius: 4px; background: #3f51b5; color: #fff; padding-bottom: 2px; font: 400 14px "Noto Sans CJK KR", sans-serif; letter-spacing: 1.300px; white-space: nowrap; }
.btn.wide { width: 95px; }
.popup { position: absolute; left: 346px; top: 161px; width: 144px; height: 125px; padding: 6px 10px; background: #fff; border-radius: 3px; box-shadow: 0 1px 2px rgba(0,0,0,.1); }
.popup::after { content: ""; position: absolute; left: 62px; top: 124px; border: 10px solid transparent; border-top-color: #fff; border-bottom: 0; }
.popup h3 { font-size: 16.400px; font-weight: 500; line-height: 24px; text-align: center; white-space: nowrap; }
.popup p { font-size: 14px; font-weight: 300; line-height: 19.200px; letter-spacing: .5px; color: #111; white-space: nowrap; font-family: "Noto Sans CJK KR", sans-serif; position: relative; top: .5px; }
.credit { position: absolute; right: 0; bottom: 0; height: 20px; padding: 0 5px; background: rgba(255,255,255,.5); color: #404040; font: 12px/20px "Liberation Sans", sans-serif; white-space: nowrap; }
.info-card { width: 884px; padding: 0 20px; }
.section-title { height: 81px; padding-top: 35px; border-bottom: 1px solid #999; margin-bottom: 31px; font-size: 20.400px; font-weight: 500; line-height: 30px; }
.section-title:first-child { height: 71px; padding-top: 25px; }
.grid { display: grid; column-gap: 40px; row-gap: 30px; }
.two { grid-template-columns: 1fr 1fr; }
.three { grid-template-columns: 1fr 1fr 1fr; }
.full { grid-column: 1 / -1; }
.field { position: relative; height: 56px; border: 1px solid #bbb; border-radius: 4px; padding: 0 0 1px 13px; display: flex; align-items: center; font: 16px "Liberation Sans", "Noto Sans CJK KR", sans-serif; }
.field > span { line-height: 24px; }
.field > .ko { padding-bottom: 1px; }
.field .ko { font-family: "Noto Sans CJK KR", sans-serif; font-weight: 350; letter-spacing: 1.300px; }
.field label { position: absolute; left: 8px; top: -11px; padding: 0 5px 0 5px; background: #fff; font: 350 12px/18px "Noto Sans CJK KR", sans-serif; letter-spacing: .8px; white-space: nowrap; }
```
